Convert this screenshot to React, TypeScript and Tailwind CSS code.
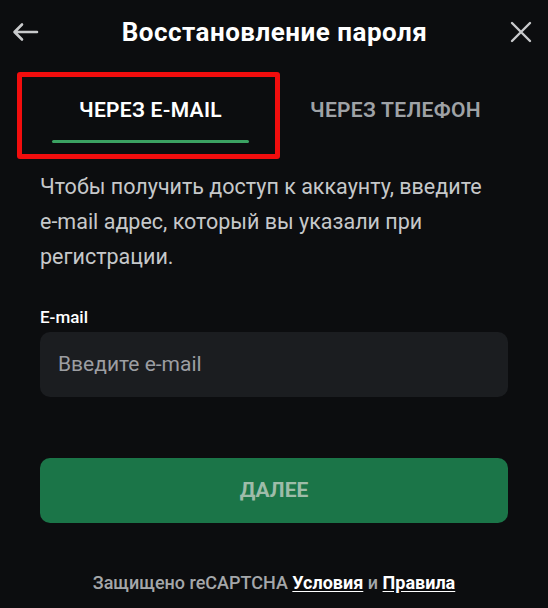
export default function App() {
  return (
    <div className="relative w-[548px] h-[608px] bg-[#0c0d0f] font-['Roboto',sans-serif] overflow-hidden">
      {/* header */}
      <div className="flex items-center h-[64px] px-[12px]">
        <svg width="27" height="20" viewBox="0 0 27 20" fill="none" stroke="#c9cacc" strokeWidth="2.6" strokeLinecap="round" strokeLinejoin="round">
          <path d="M25 10H3M10 2.5L2.5 10L10 17.5" />
        </svg>
        <h1 className="flex-1 text-center text-[26px] tracking-[0.5px] font-bold text-white leading-none">
          Восстановление пароля
        </h1>
        <svg width="22" height="22" viewBox="0 0 22 22" fill="none" stroke="#c9cacc" strokeWidth="2.4" strokeLinecap="round" className="mr-[4px]">
          <path d="M2 2L20 20M20 2L2 20" />
        </svg>
      </div>

      {/* tabs */}
      <div className="flex pl-[28px] mt-[12px]">
        <div className="w-[245px] h-[78px] flex flex-col items-center">
          <div className="pt-[21px] h-[64px] text-[21px] tracking-[0.3px] font-semibold text-white leading-[26px]">ЧЕРЕЗ E-MAIL</div>
          <div className="w-[197px] h-[3px] bg-[#3ba262] rounded-full" />
        </div>
        <div className="w-[245px] h-[78px] flex justify-center">
          <div className="pt-[21px] text-[21px] tracking-[0.3px] font-semibold text-[#9fa2a6] leading-[26px]">ЧЕРЕЗ ТЕЛЕФОН</div>
        </div>
      </div>

      {/* annotation */}
      <div className="absolute left-[17px] top-[72px] w-[263px] h-[87px] border-[5px] border-[#f20d0d] rounded-[3px]" />

      <div className="px-[40px]">
        <p className="mt-[15px] text-[21.5px] leading-[35px] text-[#c6c8ca] whitespace-nowrap">
          Чтобы получить доступ к аккаунту, введите
          <br />
          e-mail адрес, который вы указали при
          <br />
          регистрации.
        </p>

        <label className="block mt-[33px] text-[17px] font-medium text-white leading-[20px]">E-mail</label>
        <div className="mt-[5px] h-[65px] rounded-[10px] bg-[#1b1d20] flex items-center px-[18px]">
          <span className="text-[21px] text-[#9c9ea2]">Введите e-mail</span>
        </div>

        <button className="mt-[61px] w-full h-[65px] rounded-[10px] bg-[#1b7548] text-[21px] font-bold text-[#9ebca9]">
          ДАЛЕЕ
        </button>

        <p className="mt-[48px] text-center text-[18px] leading-[24px] font-medium text-[#a4a7aa]">
          Защищено reCAPTCHA{" "}
          <a className="text-white font-bold underline underline-offset-2">Условия</a> и{" "}
          <a className="text-white font-bold underline underline-offset-2">Правила</a>
        </p>
      </div>
    </div>
  );
}
